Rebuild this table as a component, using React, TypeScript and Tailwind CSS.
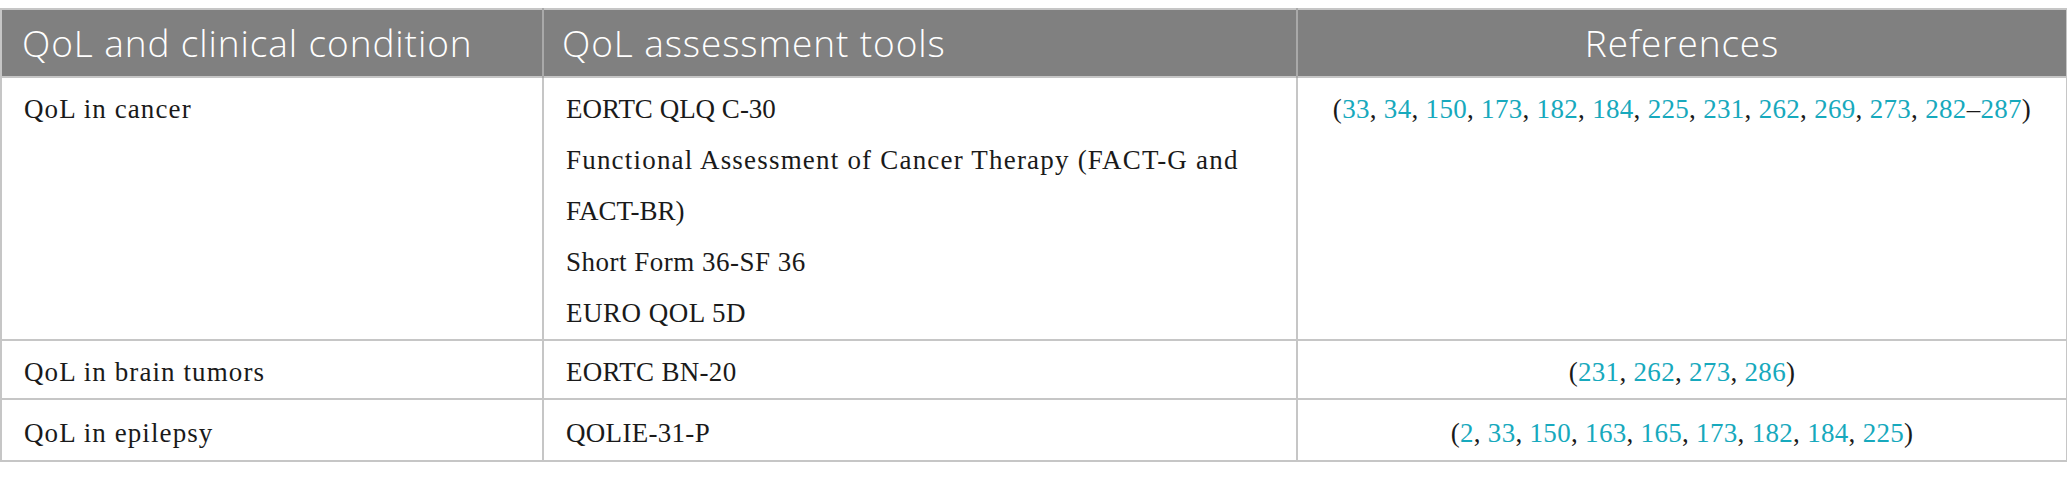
import React from "react";

const link = "text-[#17a9bd]";

function Refs({ items }: { items: (string | [string, string])[] }) {
  return (
    <span className="tracking-[0.3px]">
      (
      {items.map((it, i) => (
        <React.Fragment key={i}>
          {i > 0 && ", "}
          {Array.isArray(it) ? (
            <>
              <span className={link}>{it[0]}</span>–<span className={link}>{it[1]}</span>
            </>
          ) : (
            <span className={link}>{it}</span>
          )}
        </React.Fragment>
      ))}
      )
    </span>
  );
}

export default function App() {
  const th =
    "h-[68px] bg-[#808080] text-white font-['Open_Sans',sans-serif] font-light text-[37px] tracking-[0.9px] align-middle border-x-2 border-x-[#a9a9a9] whitespace-nowrap";
  const td =
    "align-top pt-[6px] border-2 border-[#c6c6c6] font-['Liberation_Serif',serif] text-[27px] leading-[51px] text-[#1a1a1a]";
  return (
    <div className="w-[2067px] h-[480px] bg-white pt-[8px]">
      <table className="table-fixed border-collapse w-[2066px]">
        <colgroup>
          <col className="w-[542px]" />
          <col className="w-[754px]" />
          <col className="w-[770px]" />
        </colgroup>
        <thead>
          <tr className="border-t-2 border-t-[#c6c6c6]">
            <th className={`${th} text-left pl-[20px] border-l-[#c6c6c6]`}>QoL and clinical condition</th>
            <th className={`${th} text-left pl-[18px]`}>QoL assessment tools</th>
            <th className={`${th} text-center border-r-[#c6c6c6]`}>References</th>
          </tr>
        </thead>
        <tbody>
          <tr className="h-[261px]">
            <td className={`${td} pl-[22px] tracking-[1.1px]`}>QoL in cancer</td>
            <td className={`${td} pl-[22px]`}>
              <div>EORTC QLQ C-30</div>
              <div>
                <span className="tracking-[1.2px]">Functional Assessment of Cancer Therapy (FACT-G and</span>
                <br />
                FACT-BR)
              </div>
              <div className="tracking-[0.5px]">Short Form 36-SF 36</div>
              <div className="tracking-[0.5px]">EURO QOL 5D</div>
            </td>
            <td className={`${td} text-center`}>
              <Refs
                items={["33", "34", "150", "173", "182", "184", "225", "231", "262", "269", "273", ["282", "287"]]}
              />
            </td>
          </tr>
          <tr className="h-[59px]">
            <td className={`${td} pl-[22px] tracking-[1.1px]`}>QoL in brain tumors</td>
            <td className={`${td} pl-[22px] tracking-[0.3px]`}>EORTC BN-20</td>
            <td className={`${td} text-center`}>
              <Refs items={["231", "262", "273", "286"]} />
            </td>
          </tr>
          <tr className="h-[62px]">
            <td className={`${td} pl-[22px] pt-[8px] tracking-[1.1px]`}>QoL in epilepsy</td>
            <td className={`${td} pl-[22px] pt-[8px] tracking-[0.3px]`}>QOLIE-31-P</td>
            <td className={`${td} text-center pt-[8px]`}>
              <Refs items={["2", "33", "150", "163", "165", "173", "182", "184", "225"]} />
            </td>
          </tr>
        </tbody>
      </table>
    </div>
  );
}
